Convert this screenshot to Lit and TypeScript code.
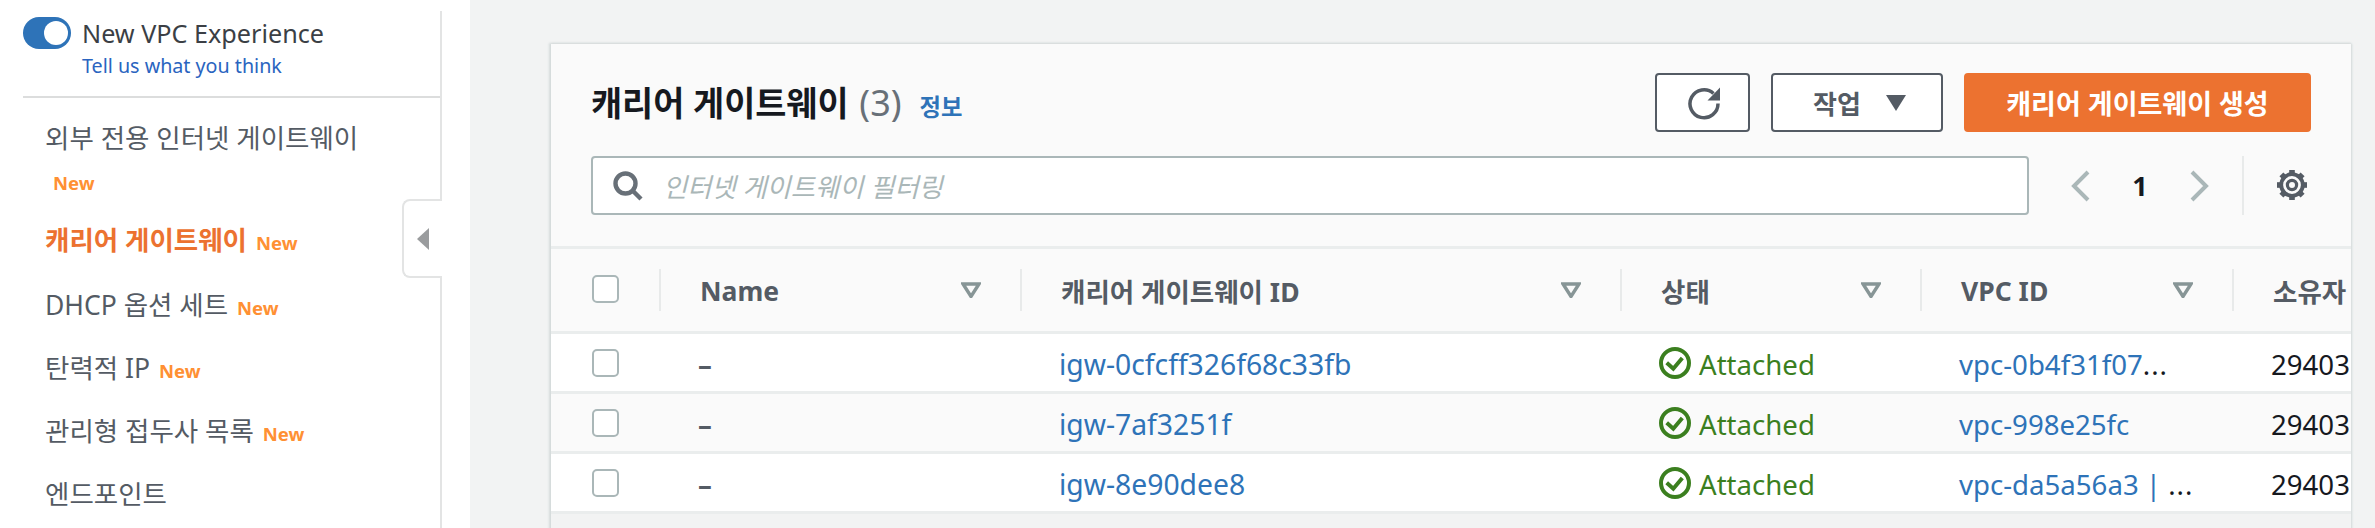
import { LitElement, html, css, svg } from "lit";
import { customElement } from "lit/decorators.js";

const rows = [
  { igw: "igw-0cfcff326f68c33fb", vpc: "vpc-0b4f31f07", more: true },
  { igw: "igw-7af3251f", vpc: "vpc-998e25fc", more: false },
  { igw: "igw-8e90dee8", vpc: "vpc-da5a56a3 | ", more: true },
];
const cols = [
  { t: "Name", sort: true },
  { t: "캐리어 게이트웨이 ID", sort: true },
  { t: "상태", sort: true },
  { t: "VPC ID", sort: true },
  { t: "소유자", sort: false },
];

const sortIcon = html`<svg class="sort" viewBox="0 0 20 16"><path d="M2 2h16L10 14.5z" fill="none" stroke="#879596" stroke-width="3.4"/></svg>`;
const okIcon = html`<svg class="ok" viewBox="0 0 32 32"><circle cx="16" cy="16" r="14" fill="none" stroke="#3b7f1f" stroke-width="4"/><path d="M7.7 15.7l6.6 6L23.3 11" fill="none" stroke="#3b7f1f" stroke-width="4"/></svg>`;

@customElement("app-root")
export class AppRoot extends LitElement {
  static styles = css`
    :host { display: flex; width: 2375px; height: 528px; overflow: hidden; background: #f2f3f3; font-family: "Noto Sans", "Noto Sans CJK KR", sans-serif; color: #545b64; }
    .side { position: relative; width: 470px; height: 528px; flex: none; background: #fff; padding-top: 11px; box-sizing: border-box; }
    .side-in { width: 442px; height: 517px; box-sizing: border-box; border-right: 2px solid #e3e4e4; }
    .exp { height: 87px; margin-left: 23px; box-sizing: border-box; border-bottom: 2px solid #dcdddd; display: flex; gap: 11px; }
    .toggle { width: 48px; height: 32px; margin-top: 6px; border-radius: 16px; background: #2e73b8; position: relative; flex: none; }
    .toggle i { position: absolute; right: 3px; top: 4px; width: 24px; height: 24px; border-radius: 50%; background: #fff; }
    .exp-t { font-size: 25.2px; line-height: 32px; color: #3b3f45; margin-top: 6px; white-space: nowrap; }
    .exp-l { font-size: 19.7px; line-height: 26px; color: #2a64c0; margin-top: 4px; white-space: nowrap; }
    nav { padding: 20px 0 0 45px; }
    .item { font-size: 26.5px; line-height: 40px; height: 40px; margin-bottom: 23px; white-space: nowrap; color: #545b64; display: flex; gap: 9px; align-items: baseline; }
    .item.wrap { display: block; height: auto; margin-bottom: 20px; }
    .item.active { color: #ec7230; font-weight: 700; margin-top: 2px; margin-bottom: 25px; }
    .new { font-size: 18.5px; line-height: 1; font-weight: 700; color: #ff9033; }
    .wrap .new { display: block; line-height: 34px; margin: 8px 0 0 8px; }
    .tab { position: absolute; left: 402px; top: 199px; width: 40px; height: 79px; box-sizing: border-box; background: #fff; border: 2px solid #e3e4e4; border-right: none; border-radius: 8px 0 0 8px; display: flex; align-items: center; padding-left: 13px; }
    .tab svg { width: 13px; height: 22px; }
    main { flex: 1; padding: 44px 24px 0 81px; min-width: 0; }
    .card { background: #f2f3f3; height: 500px; box-shadow: -1px 0 2px 1px #d5dbdb, 1px 0 2px 0 #d5dbdb, 0 -2px 2px -1px #e6e8e8; overflow: hidden; }
    .head { height: 205px; box-sizing: border-box; padding: 29px 40px 0; border-bottom: 3px solid #eaeded; background: #fafafa; }
    .top { display: flex; align-items: flex-start; height: 59px; }
    .title { font-size: 33.8px; font-weight: 700; line-height: 59px; color: #16191f; white-space: nowrap; }
    .count { font-weight: 400; font-size: 36px; color: #687078; margin-left: 2px; }
    .info { font-size: 23.3px; line-height: 68px; font-weight: 700; color: #2e73b8; margin-left: 18px; white-space: nowrap; }
    .actions { margin-left: auto; display: flex; gap: 21px; }
    .btn { height: 59px; box-sizing: border-box; border: 2px solid #545b64; border-radius: 4px; background: #fff; display: flex; align-items: center; justify-content: center; font-weight: 700; font-size: 26px; color: #545b64; white-space: nowrap; }
    .refresh { width: 95px; }
    .refresh svg { width: 34px; height: 34px; }
    .act { width: 172px; gap: 25px; padding-left: 5px; }
    .act svg { width: 20px; height: 16px; }
    .create { width: 347px; background: #ec7230; border-color: #ec7230; color: #fff; font-size: 27px; }
    .filter { display: flex; align-items: center; margin-top: 24px; height: 59px; }
    .search { flex: 1; min-width: 0; height: 59px; box-sizing: border-box; border: 2px solid #aab7b8; border-radius: 4px; background: #fff; display: flex; align-items: center; padding-left: 20px; gap: 20px; font-size: 26.3px; font-style: italic; color: #aab7b8; white-space: nowrap; }
    .search svg { width: 30px; height: 30px; flex: none; }
    .pager { display: flex; align-items: center; flex: none; width: 241px; height: 59px; margin-left: 41px; }
    .pager svg.ch { width: 20px; height: 32px; flex: none; }
    .num { width: 100px; text-align: center; font-size: 27px; font-weight: 700; color: #16191f; }
    .sep { width: 2px; height: 59px; background: #e8eaea; margin-left: 32px; flex: none; }
    .gear { width: 34px; height: 34px; margin: -2px 0 0 31px; flex: none; }
    .grid { display: grid; grid-template-columns: 108px 361px 600px 300px 312px 119px; }
    .thead { height: 85px; border-bottom: 3px solid #eaeded; box-sizing: border-box; background: #fafafa; }
    .th { position: relative; display: flex; align-items: center; justify-content: space-between; padding: 0 39px 0 40px; font-size: 26.5px; font-weight: 700; color: #545b64; white-space: nowrap; height: 82px; overflow: hidden; }
    .th span { margin-top: 1px; margin-left: 1px; }
    .th::before { content: ""; position: absolute; left: 0; top: 20px; width: 2px; height: 42px; background: #e8eaea; }
    .sort { width: 20px; height: 16px; flex: none; }
    .tr { height: 60px; box-sizing: border-box; border-bottom: 3px solid #eaeded; background: #fff; }
    .tr:nth-child(even) { background: #fafafa; }
    .td { display: flex; align-items: center; padding-left: 39px; font-size: 27.6px; white-space: pre; overflow: hidden; color: #16191f; height: 57px; padding-top: 3px; box-sizing: border-box; }
    .td.igw { font-size: 28.3px; }
    .box { width: 27px; height: 28px; box-sizing: border-box; border: 2px solid #aab7b8; border-radius: 5px; background: #fff; flex: none; }
    .td.c0 { padding: 0 0 0 41px; }
    .thead .c0 { height: 82px; }
    .thead .c0 .box { margin-top: -3px; }
    .dash { color: #545b64; font-weight: 700; }
    .lnk { color: #2e73b8; }
    .more { letter-spacing: 1px; color: #16191f; }
    .ok { width: 32px; height: 32px; flex: none; margin-right: 8px; margin-top: -3px; }
    .st { color: #3b7f1f; }
  `;

  private gear() {
    const teeth = [0, 45, 90, 135, 180, 225, 270, 315].map(
      (a) => svg`<rect x="14.2" y="2" width="5.6" height="6" fill="#545b64" transform="rotate(${a} 17 17)"/>`
    );
    return html`<svg class="gear" viewBox="0 0 34 34">${teeth}<circle cx="17" cy="17" r="10.8" fill="none" stroke="#545b64" stroke-width="3.8"/><circle cx="17" cy="17" r="4.6" fill="none" stroke="#545b64" stroke-width="3.2"/></svg>`;
  }

  render() {
    return html`
      <div class="side">
        <div class="side-in">
          <div class="exp">
            <div class="toggle"><i></i></div>
            <div>
              <div class="exp-t">New VPC Experience</div>
              <div class="exp-l">Tell us what you think</div>
            </div>
          </div>
          <nav>
            <div class="item wrap">외부 전용 인터넷 게이트웨이<span class="new">New</span></div>
            <div class="item active">캐리어 게이트웨이<span class="new">New</span></div>
            <div class="item">DHCP 옵션 세트<span class="new">New</span></div>
            <div class="item">탄력적 IP<span class="new">New</span></div>
            <div class="item">관리형 접두사 목록<span class="new">New</span></div>
            <div class="item">엔드포인트</div>
          </nav>
        </div>
        <div class="tab"><svg viewBox="0 0 13 22"><path d="M12 0v22L0 11z" fill="#9a9c9e"/></svg></div>
      </div>
      <main>
        <div class="card">
          <div class="head">
            <div class="top">
              <div class="title">캐리어 게이트웨이 <span class="count">(3)</span></div>
              <div class="info">정보</div>
              <div class="actions">
                <div class="btn refresh"><svg viewBox="0 0 34 34"><path d="M27.5 7.5A14 14 0 1 0 32 17.5" fill="none" stroke="#545b64" stroke-width="3.5"/><path d="M34 1.5v13H21.5z" fill="#545b64"/></svg></div>
                <div class="btn act">작업<svg viewBox="0 0 20 16"><path d="M0 0h20L10 16z" fill="#545b64"/></svg></div>
                <div class="btn create">캐리어 게이트웨이 생성</div>
              </div>
            </div>
            <div class="filter">
              <div class="search">
                <svg viewBox="0 0 30 30"><circle cx="12.5" cy="12.5" r="10" fill="none" stroke="#687078" stroke-width="4.4"/><path d="M19.5 19.5L28 28" stroke="#687078" stroke-width="4.4"/></svg>
                인터넷 게이트웨이 필터링
              </div>
              <div class="pager">
                <svg class="ch" viewBox="0 0 20 32"><path d="M18 2L4 16l14 14" fill="none" stroke="#aab7b8" stroke-width="4"/></svg>
                <div class="num">1</div>
                <svg class="ch" viewBox="0 0 20 32"><path d="M2 2l14 14L2 30" fill="none" stroke="#aab7b8" stroke-width="4"/></svg>
                <div class="sep"></div>
                ${this.gear()}
              </div>
            </div>
          </div>
          <div class="grid thead">
            <div class="td c0"><div class="box"></div></div>
            ${cols.map((c) => html`<div class="th"><span>${c.t}</span>${c.sort ? sortIcon : ""}</div>`)}
          </div>
          <div class="tbody">
            ${rows.map(
              (r) => html`<div class="grid tr">
                <div class="td c0"><div class="box"></div></div>
                <div class="td"><span class="dash">–</span></div>
                <div class="td igw"><span class="lnk">${r.igw}</span></div>
                <div class="td st">${okIcon}Attached</div>
                <div class="td"><span class="lnk">${r.vpc}</span>${r.more ? html`<span class="more">...</span>` : ""}</div>
                <div class="td">29403</div>
              </div>`
            )}
          </div>
        </div>
      </main>
    `;
  }
}
